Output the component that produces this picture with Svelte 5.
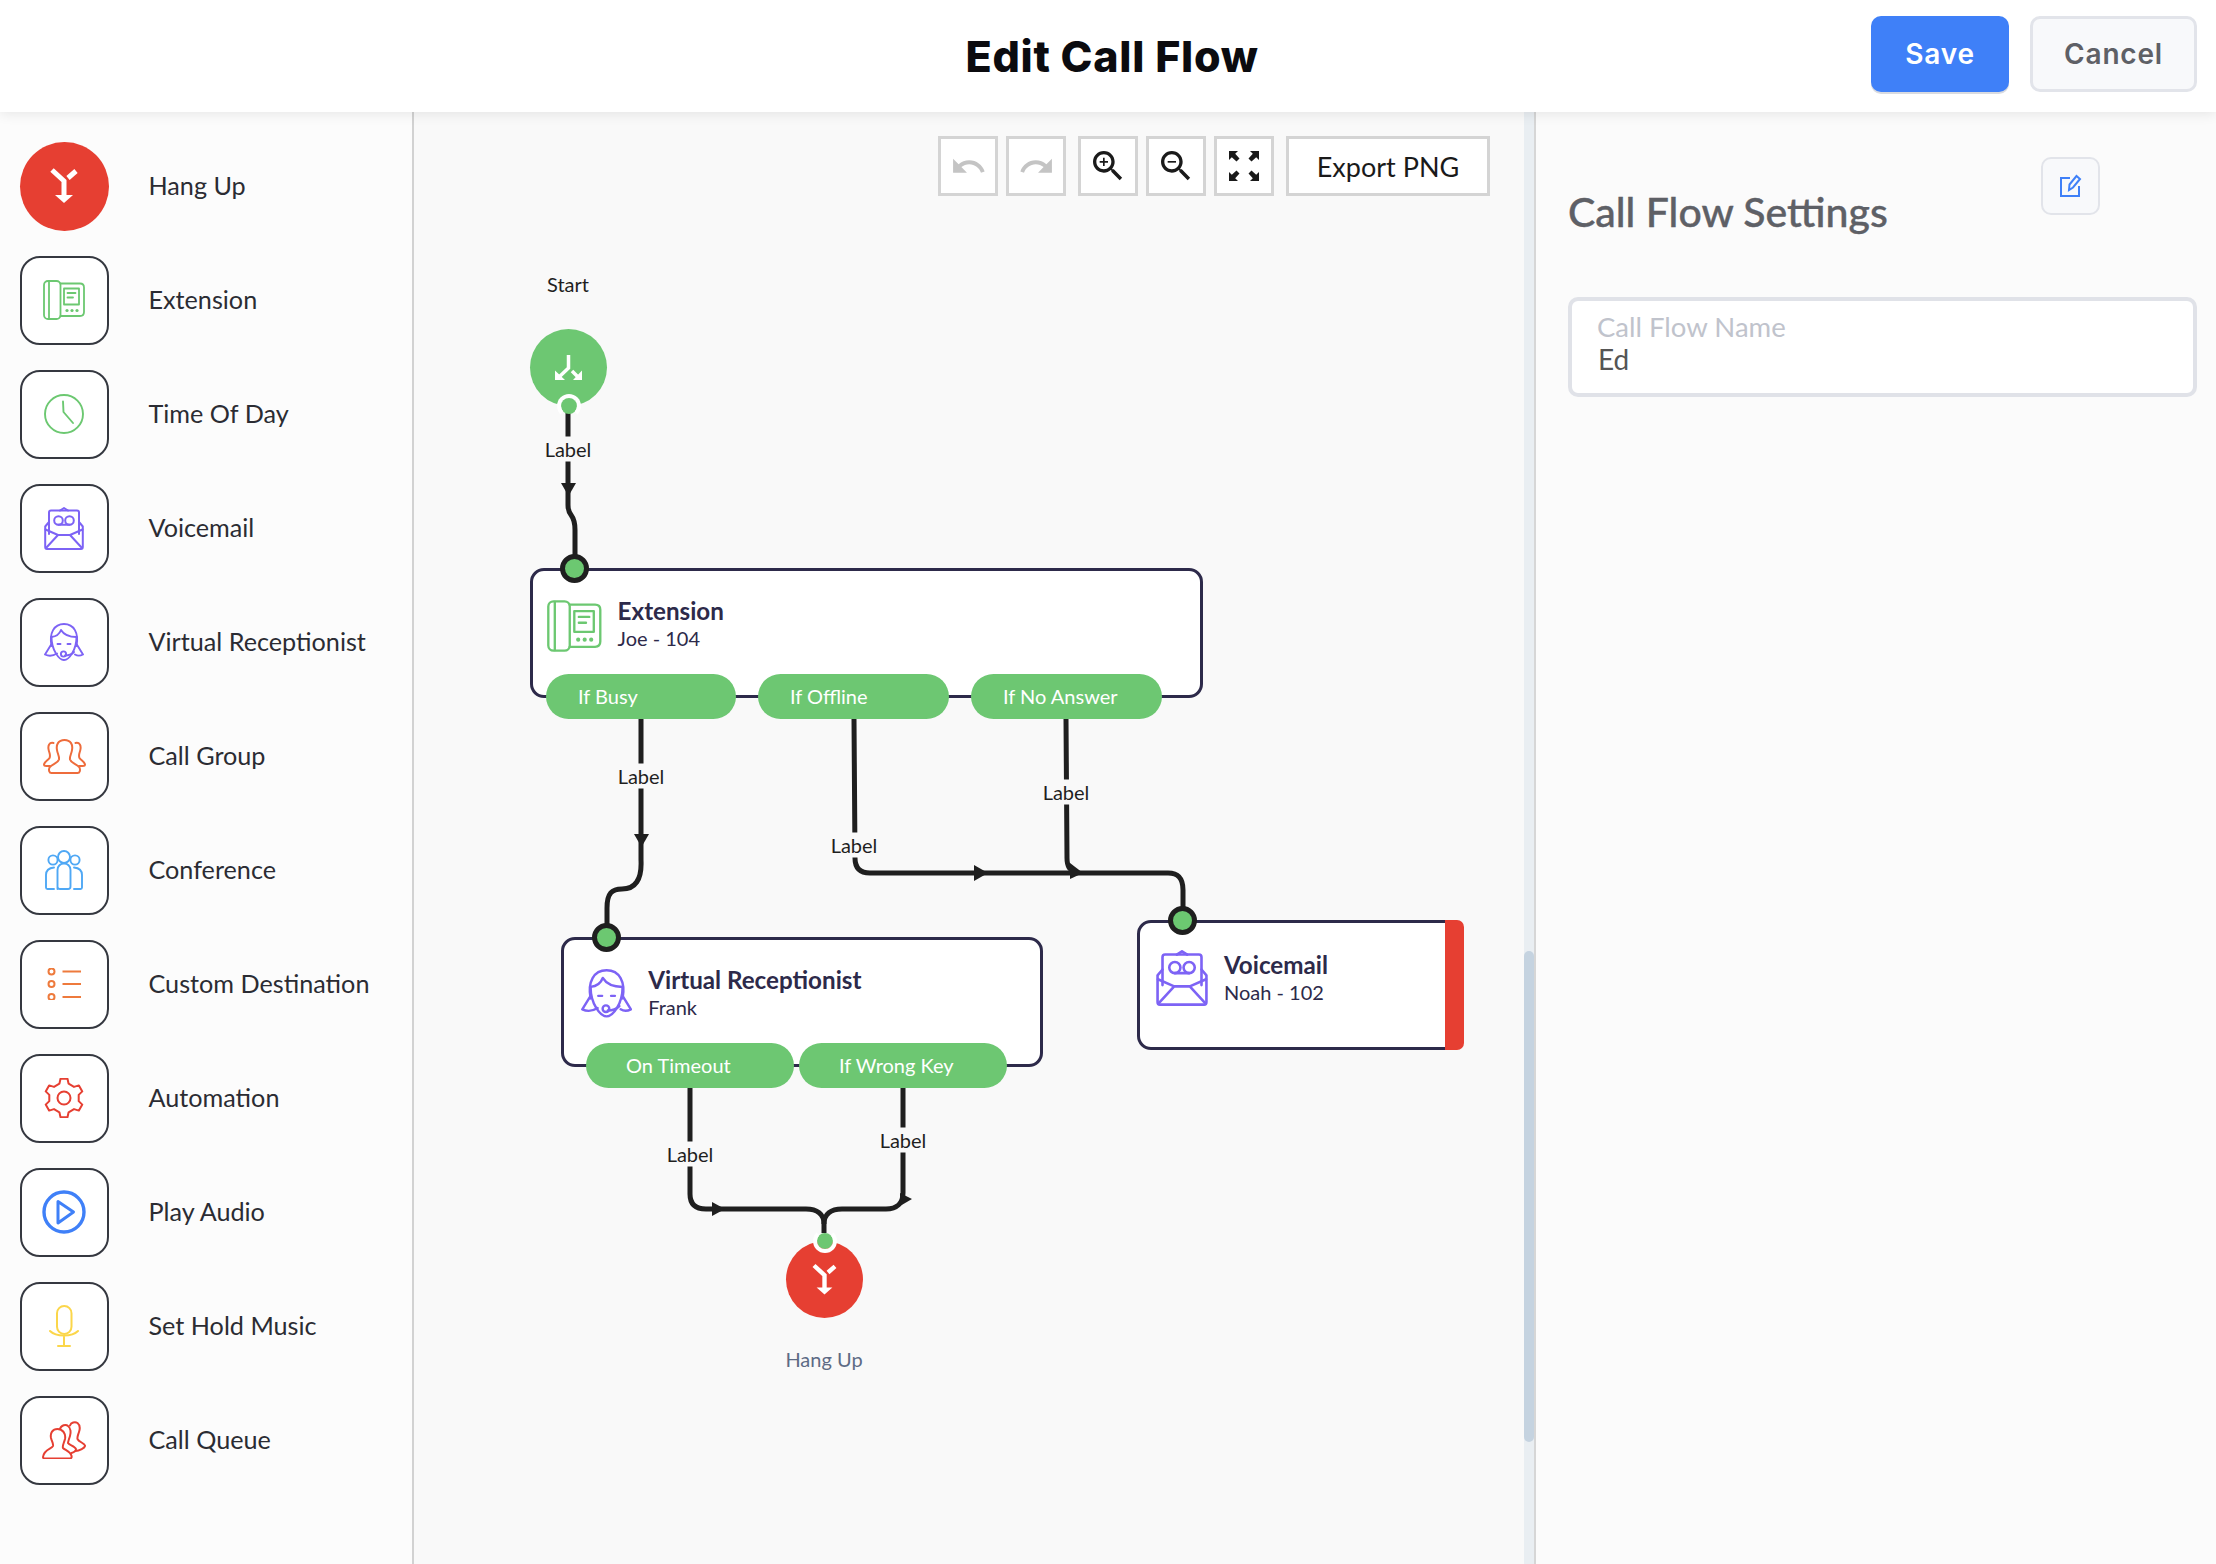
<script>
  const tools = [
    { label: "Hang Up", icon: "hangup", round: true },
    { label: "Extension", icon: "extension" },
    { label: "Time Of Day", icon: "clock" },
    { label: "Voicemail", icon: "voicemail" },
    { label: "Virtual Receptionist", icon: "receptionist" },
    { label: "Call Group", icon: "group" },
    { label: "Conference", icon: "conference" },
    { label: "Custom Destination", icon: "custom" },
    { label: "Automation", icon: "gear" },
    { label: "Play Audio", icon: "play" },
    { label: "Set Hold Music", icon: "mic" },
    { label: "Call Queue", icon: "queue" },
  ];

  const sizes = {
    hangup: [88, 88], extension: [42, 40], clock: [40, 40], voicemail: [40, 43],
    receptionist: [40, 38], group: [43, 35], conference: [38, 40], custom: [34, 32],
    gear: [40, 40], play: [44, 44], mic: [30, 42], queue: [44, 38],
  };

  // canvas starts at 414,112 in page coordinates
  const OX = 414;
  const OY = 112;

  const nodes = [
    {
      title: "Extension", sub: "Joe - 104", icon: "extension", scale: 1.3,
      x: 529.5, y: 568, w: 673, h: 130, port: 45.5, pad: 17.5, bodyTop: 29, textTop: 0,
      pills: [
        { text: "If Busy", x: 16.5, w: 190, pad: 32 },
        { text: "If Offline", x: 228.5, w: 191, pad: 32 },
        { text: "If No Answer", x: 441.5, w: 191, pad: 32 },
      ],
    },
    {
      title: "Virtual Receptionist", sub: "Frank", icon: "receptionist", scale: 1.28,
      x: 561, y: 937, w: 482, h: 130, port: 46, pad: 20, bodyTop: 29, textTop: 0,
      pills: [
        { text: "On Timeout", x: 25, w: 208, pad: 40 },
        { text: "If Wrong Key", x: 238, w: 208, pad: 40 },
      ],
    },
    {
      title: "Voicemail", sub: "Noah - 102", icon: "voicemail", scale: 1.3,
      x: 1137, y: 920, w: 327, h: 130, port: 46, pad: 19, bodyTop: 27, textTop: 4, bar: true, pills: [],
    },
  ];

  const edgeLabels = [
    [568, 449], [641, 776], [854, 845], [1066, 792], [690, 1154], [903, 1140],
  ];

  const edges = [
    "M568 413V505C568 518 575 512 575 530V556",
    "M641 719V860C642 880 635 889 622 889C612 889 607 893 607 908V925",
    "M854 719L855 858C855 868 860 873 870 873H1168C1178 873 1183 878 1183 890V908",
    "M1066 719L1067 858C1067 867 1070 870 1076 873",
    "M690 1087V1194C690 1204 695 1209 706 1209H806C817 1209 824 1214 824 1224V1233",
    "M903 1087V1193C903 1203 897 1209 886 1209H842C831 1209 824 1214 824 1224",
  ];

  const arrows = [
    "561,483 576,483 568.5,496",
    "634,834 649,834 641.5,847",
    "974,865 988,873 974,881",
    "1070,863 1083,873 1070,879",
    "712,1202 725,1209 712,1216",
    "900,1193 912,1199 900,1206",
  ];

  function gearPath(teeth, cx, cy, outer, root) {
    let pts = [];
    const step = (Math.PI * 2) / teeth;
    for (let i = 0; i < teeth; i++) {
      const a = -Math.PI / 2 + i * step;
      const at = (ang, r) => `${(cx + Math.cos(ang) * r).toFixed(1)} ${(cy + Math.sin(ang) * r).toFixed(1)}`;
      pts.push(at(a - step * 0.3, root), at(a - step * 0.17, outer), at(a + step * 0.17, outer), at(a + step * 0.3, root));
    }
    return "M" + pts.join("L") + "Z";
  }
</script>

{#snippet glyph(name, scale)}
  <svg class="glyph" width={sizes[name][0] * scale} height={sizes[name][1] * scale} viewBox="0 0 {sizes[name][0]} {sizes[name][1]}" fill="none" stroke-linecap="round" stroke-linejoin="round">
    {#if name === "hangup"}
      <g stroke="#fff" stroke-width="5" stroke-linecap="butt" stroke-linejoin="miter">
        <path d="M32 28L44 39V54M56 29L48 36" />
      </g>
      <path d="M35 53H53L44 61Z" fill="#fff" />
    {:else if name === "extension"}
      <g stroke="#6cc871" stroke-width="1.8">
        <rect x="1" y="1" width="16.5" height="38" rx="4" />
        <path d="M6 1.5V38.5" />
        <path d="M17.5 3.5H37C39.5 3.5 41 5 41 7.5V32C41 34.5 39.5 36 37 36H17.5" />
        <rect x="21" y="8.5" width="15" height="16" />
        <path d="M24.5 13H32.5M24.5 17.5H30" />
      </g>
      <g fill="#6cc871">
        <circle cx="24" cy="30.5" r="1.6" /><circle cx="29" cy="30.5" r="1.6" /><circle cx="34" cy="30.5" r="1.6" />
      </g>
    {:else if name === "clock"}
      <g stroke="#6cc871" stroke-width="1.9">
        <circle cx="20" cy="20" r="19" />
        <path d="M19 7.5L19.5 18L29 29" />
      </g>
    {:else if name === "voicemail"}
      <g stroke="#7d63f5" stroke-width="2">
        <path d="M5 27V5.5C5 4 6 3.5 7 3.5H33C34 3.5 35 4 35 5.5V27" />
        <path d="M16 3.5L20 1L24 3.5" />
        <circle cx="14.5" cy="13.5" r="4.3" /><circle cx="25.5" cy="13.5" r="4.3" />
        <path d="M14.5 17.8H25.5" />
        <path d="M5 15L1.2 19.5V40C1.2 41.2 2 42 3 42H37C38 42 38.8 41.2 38.8 40V19.5L35 15" />
        <path d="M2 41L14 28H26L38 41M1.5 22.5L14 28M38.5 22.5L26 28" />
      </g>
    {:else if name === "receptionist"}
      <g stroke="#7d63f5" stroke-width="1.9">
        <path d="M7.5 23C5 10 10 1 20 1C30 1 35 10 32.5 23" />
        <path d="M7.5 14C12 13.5 15.5 11 17 7C20 12 26 14 32.5 14" />
        <path d="M7.5 14C7.5 27 15 37 20 37C25 37 32.5 27 32.5 14" />
        <path d="M7.5 21L1 31.5C5 33.5 9 33 13 30.5M32.5 21L39 31.5C36 33 33.5 33 31 31.5" />
        <path d="M13.5 21H16.5M23.5 21H26.5" />
        <path d="M21 32.5C25 32.5 28 31 30 29" />
      </g>
      <circle cx="19.5" cy="31" r="2.6" stroke="#7d63f5" stroke-width="1.9" />
    {:else if name === "group"}
      <g stroke="#ee6c3c" stroke-width="2">
        <path d="M21.5 1C15 1 13 6 14 11C14.5 15 16.5 17 16 20.5C15 24 9 25 6.5 28.5C5.5 31 6 34 8.5 34H34.5C37 34 37.5 31 36.5 28.5C34 25 28 24 27 20.5C26.5 17 28.5 15 29 11C30 6 28 1 21.5 1Z" />
        <path d="M10.5 4C6 3 5 7 5.5 10C6 14 8 15.5 6.5 19C5 21.5 1.5 22.5 1 25.5C1 26.5 2 27 3.5 27H7" />
        <path d="M32.5 4C37 3 38 7 37.5 10C37 14 35 15.5 36.5 19C38 21.5 41.5 22.5 42 25.5C42 26.5 41 27 39.5 27H36" />
      </g>
    {:else if name === "conference"}
      <g stroke="#4fa8f5" stroke-width="1.9">
        <circle cx="19" cy="7" r="6" /><circle cx="8" cy="10" r="4.6" /><circle cx="30" cy="10" r="4.6" />
        <path d="M12.5 39V20C12.5 16 15.5 13.5 19 13.5C22.5 13.5 25.5 16 25.5 20V36.5C25.5 38 24.5 39 23 39H15C13.5 39 12.5 38 12.5 36.5" />
        <path d="M9 17.5C4 18 1 20.5 1 25V37.5C1 38.5 1.5 39 2.5 39H9" />
        <path d="M29 17.5C34 18 37 20.5 37 25V37.5C37 38.5 36.5 39 35.5 39H29" />
      </g>
    {:else if name === "custom"}
      <g stroke="#ee7a3c" stroke-width="2">
        <circle cx="4.5" cy="3.5" r="3" /><circle cx="4.5" cy="16" r="3" /><circle cx="4.5" cy="29" r="3" />
        <path d="M15.5 3.5H36M15.5 16H36M15.5 29H36" stroke-linecap="butt" />
      </g>
    {:else if name === "gear"}
      <g stroke="#e63f32" stroke-width="2">
        <path d={gearPath(6, 20, 20, 19.5, 15)} />
        <circle cx="20" cy="20" r="6.5" />
      </g>
    {:else if name === "play"}
      <g stroke="#3f80f8" stroke-width="3.4">
        <circle cx="22" cy="22" r="20" />
        <path d="M16 11.5L31.5 22L16 33Z" stroke-width="3" />
      </g>
    {:else if name === "mic"}
      <g stroke="#fbd64a" stroke-width="2">
        <rect x="8" y="1" width="14.5" height="28" rx="7.2" />
        <path d="M1 26C7 32 23 32 29 26M15 32V41M9 41H21" />
      </g>
    {:else if name === "queue"}
      <g stroke="#e63f32" stroke-width="2">
        <path d="M15.5 8C10.5 8 8 12 9 17C10 21 11.5 22.5 11 25C10 28 2 28 1 36C1 37 2 37.5 3 37.5H27C29 37.5 30 37 29.5 35C29 31 23 29 21 27C20 25 22 22 23 18C24 13 21 8 15.5 8Z" />
        <path d="M18 8C19 4 24 3 26 5C29 7 29 12 28 15C27 18 26 21 26 22C27 24 33 25 34 28C34 29 33 31 29.5 32" />
        <path d="M28 4.5C29 1.5 33 0.5 35.5 2C38 4 38 8 37 11C36 14 35 16 35.5 18C37 21 42 22 43 24.5C43.5 27 37 30 33.5 30" />
      </g>
    {/if}
  </svg>
{/snippet}

<div class="page">
  <header class="appbar">
    <div></div>
    <h1>Edit Call Flow</h1>
    <div class="actions">
      <button class="save">Save</button>
      <button class="cancel">Cancel</button>
    </div>
  </header>

  <div class="main">
    <aside class="tools">
      {#each tools as tool}
        <div class="tool">
          <div class="tile" class:round={tool.round}>
            {@render glyph(tool.icon, 1)}
          </div>
          <span>{tool.label}</span>
        </div>
      {/each}
    </aside>

    <section class="canvas">
      <div class="toolbar">
        <div class="tb-group">
          <button class="tb" aria-label="Undo">
            <svg width="37" height="37" viewBox="0 0 24 24" fill="#c4c4c4"><path d="M12.5 8c-2.65 0-5.05.99-6.9 2.6L2 7v9h9l-3.62-3.62c1.39-1.16 3.16-1.88 5.12-1.88 3.54 0 6.55 2.31 7.6 5.5l2.37-.78C21.08 11.03 17.15 8 12.5 8z" /></svg>
          </button>
          <button class="tb" aria-label="Redo">
            <svg width="37" height="37" viewBox="0 0 24 24" fill="#c4c4c4"><path d="M18.4 10.6C16.55 8.99 14.15 8 11.5 8c-4.65 0-8.58 3.03-9.96 7.22L3.9 16c1.05-3.19 4.05-5.5 7.6-5.5 1.95 0 3.73.72 5.12 1.88L13 16h9V7l-3.6 3.6z" /></svg>
          </button>
        </div>
        <div class="tb-group">
          <button class="tb" aria-label="Zoom in">
            <svg width="40" height="40" viewBox="0 0 24 24" fill="#1a1a1a"><path d="M15.5 14h-.79l-.28-.27C15.41 12.59 16 11.11 16 9.5 16 5.91 13.09 3 9.5 3S3 5.91 3 9.5 5.91 16 9.5 16c1.61 0 3.09-.59 4.23-1.57l.27.28v.79l5 4.99L20.49 19l-4.99-5zm-6 0C7.01 14 5 11.99 5 9.5S7.01 5 9.5 5 14 7.01 14 9.5 11.99 14 9.5 14z" /><path d="M12 10h-2v2H9v-2H7V9h2V7h1v2h2v1z" /></svg>
          </button>
          <button class="tb" aria-label="Zoom out">
            <svg width="40" height="40" viewBox="0 0 24 24" fill="#1a1a1a"><path d="M15.5 14h-.79l-.28-.27C15.41 12.59 16 11.11 16 9.5 16 5.91 13.09 3 9.5 3S3 5.91 3 9.5 5.91 16 9.5 16c1.61 0 3.09-.59 4.23-1.57l.27.28v.79l5 4.99L20.49 19l-4.99-5zm-6 0C7.01 14 5 11.99 5 9.5S7.01 5 9.5 5 14 7.01 14 9.5 11.99 14 9.5 14z" /><path d="M7 9h5v1H7z" /></svg>
          </button>
          <button class="tb" aria-label="Fit">
            <svg width="30" height="30" viewBox="0 0 30 30" fill="#1a1a1a">
              <path d="M0 0H9L6.2 2.8L10.5 7.5L7.5 10.5L2.8 6.2L0 9Z" />
              <path d="M30 0H21L23.8 2.8L19.5 7.5L22.5 10.5L27.2 6.2L30 9Z" />
              <path d="M0 30H9L6.2 27.2L10.5 22.5L7.5 19.5L2.8 23.8L0 21Z" />
              <path d="M30 30H21L23.8 27.2L19.5 22.5L22.5 19.5L27.2 23.8L30 21Z" />
            </svg>
          </button>
        </div>
        <button class="tb export">Export PNG</button>
      </div>

      <svg class="edges" width="1120" height="1452" viewBox="{OX} {OY} 1120 1452" fill="none">
        {#each edges as d}
          <path {d} stroke="#1f1f1f" stroke-width="5" />
        {/each}
        {#each arrows as points}
          <polygon {points} fill="#1f1f1f" />
        {/each}
      </svg>

      {#each edgeLabels as [x, y]}
        <div class="edge-label" style="left: {x - OX}px; top: {y - OY}px">Label</div>
      {/each}

      <div class="terminal-caption" style="left: {568 - OX}px; top: {284 - OY}px">Start</div>
      <div class="terminal start" style="left: {530 - OX}px; top: {329 - OY}px">
        <svg width="77" height="77" viewBox="0 0 77 77" fill="none" stroke="#fff" stroke-width="3.5">
          <path d="M38.5 26V39L28 49M42 42L49 49" />
          <path d="M25 41.5V51H35Z" fill="#fff" stroke="none" />
          <path d="M52 41.5V51H43Z" fill="#fff" stroke="none" />
        </svg>
        <i class="term-port below"></i>
      </div>

      {#each nodes as n}
        <div class="node" style="left: {n.x - OX}px; top: {n.y - OY}px; width: {n.w}px; height: {n.h}px; padding: {n.bodyTop}px 0 0 {n.pad - 3}px">
          <i class="node-port" style="left: {n.port - 18}px"></i>
          {@render glyph(n.icon, n.scale)}
          <div class="node-text" style="margin-top: {n.textTop}px">
            <strong>{n.title}</strong>
            <span>{n.sub}</span>
          </div>
          {#if n.bar}<b class="bar"></b>{/if}
          {#each n.pills as p}
            <div class="pill" style="left: {p.x - 3}px; width: {p.w}px; padding-left: {p.pad}px">{p.text}</div>
          {/each}
        </div>
      {/each}

      <div class="terminal hang" style="left: {786 - OX}px; top: {1241 - OY}px">
        <svg width="77" height="77" viewBox="0 0 88 88">
          <path d="M32 28L44 39V54M56 29L48 36" stroke="#fff" stroke-width="5" fill="none" />
          <path d="M35 53H53L44 61Z" fill="#fff" />
        </svg>
        <i class="term-port above"></i>
      </div>
      <div class="terminal-caption muted" style="left: {824 - OX}px; top: {1359 - OY}px">Hang Up</div>

      <div class="scrollbar"><div class="thumb"></div></div>
    </section>

    <aside class="settings">
      <div class="settings-head">
        <h2>Call Flow Settings</h2>
        <button class="edit" aria-label="Edit">
          <svg width="26" height="26" viewBox="0 0 26 26" fill="none" stroke="#3f80f8" stroke-width="2">
            <path d="M12 5H3V23H21V13" />
            <path d="M11 17L11.5 11.5L18.5 3L22 6L15 14.5Z" />
          </svg>
        </button>
      </div>
      <div class="field">
        <label for="flow-name">Call Flow Name</label>
        <input id="flow-name" value="Ed" />
      </div>
    </aside>
  </div>
</div>

<style>
  :global(body) {
    margin: 0;
    background: #fbfbfb;
    font-family: Lato, "Open Sans", sans-serif;
  }
  .page {
    width: 2216px;
    height: 1564px;
    display: flex;
    flex-direction: column;
    overflow: hidden;
  }
  .appbar {
    height: 112px;
    flex: none;
    box-sizing: border-box;
    background: #fff;
    box-shadow: 0 2px 12px rgba(0, 0, 0, 0.09);
    display: grid;
    grid-template-columns: 1fr auto 1fr;
    align-items: center;
    padding: 0 19px 0 27px;
    position: relative;
    z-index: 2;
  }
  h1 {
    margin: 0;
    font-family: Inter, sans-serif;
    font-weight: 800;
    font-size: 43px;
    letter-spacing: 0.7px;
    color: #0b0b0f;
  }
  .actions {
    display: flex;
    justify-content: flex-end;
    gap: 21px;
    margin-top: -4px;
  }
  .actions button {
    height: 76px;
    border-radius: 10px;
    font-family: Inter, sans-serif;
    font-size: 28px;
    font-weight: 600;
    letter-spacing: 0.8px;
  }
  .save {
    width: 138px;
    background: #3f80f8;
    color: #fff;
    border: none;
    box-shadow: 0 2px 0 #d9dbe0;
  }
  .cancel {
    width: 167px;
    background: #f8f9fb;
    color: #5e6066;
    border: 3px solid #e2e4ea;
  }
  .main {
    flex: 1;
    display: flex;
    min-height: 0;
  }
  .tools {
    width: 414px;
    box-sizing: border-box;
    flex: none;
    background: #fcfcfc;
    border-right: 2px solid #d2d2d2;
    padding: 29.5px 0 0 20px;
    display: flex;
    flex-direction: column;
    gap: 25px;
  }
  .tool {
    display: flex;
    align-items: center;
    gap: 40px;
    height: 89px;
    font-size: 25.2px;
    color: #2b2c33;
  }
  .tool span {
    margin-top: -2px;
  }
  .tile {
    width: 88.5px;
    height: 89px;
    box-sizing: border-box;
    flex: none;
    background: #fff;
    border: 2.5px solid #353840;
    border-radius: 20px;
    display: flex;
    align-items: center;
    justify-content: center;
  }
  .tile.round {
    background: #e63f32;
    border: none;
    border-radius: 50%;
  }
  .glyph {
    flex: none;
  }
  .canvas {
    width: 1120px;
    flex: none;
    position: relative;
    background: #f9f9f9;
  }
  .toolbar {
    display: flex;
    justify-content: flex-end;
    gap: 12px;
    padding: 24px 44px 0 0;
    position: relative;
    z-index: 1;
  }
  .tb-group {
    display: flex;
    gap: 8px;
  }
  .tb {
    width: 60px;
    height: 60px;
    padding: 0;
    box-sizing: border-box;
    background: #fff;
    border: 3px solid #d4d4d4;
    display: flex;
    align-items: center;
    justify-content: center;
  }
  .export {
    width: 204px;
    font-family: Lato, sans-serif;
    font-size: 27px;
    color: #1a1a1a;
  }
  .edges {
    position: absolute;
    left: 0;
    top: 0;
  }
  .edge-label {
    position: absolute;
    transform: translate(-50%, -50%);
    background: #f9f9f9;
    font-size: 20px;
    line-height: 25px;
    color: #1f1f1f;
  }
  .terminal-caption {
    position: absolute;
    transform: translate(-50%, -50%);
    font-size: 20px;
    color: #1f1f1f;
    white-space: nowrap;
  }
  .terminal-caption.muted {
    color: #5d6b85;
  }
  .terminal {
    position: absolute;
    width: 77px;
    height: 77px;
    border-radius: 50%;
  }
  .terminal svg {
    display: block;
  }
  .terminal.start {
    background: #6dc772;
  }
  .terminal.hang {
    background: #e63f32;
  }
  .term-port {
    position: absolute;
    left: 26.5px;
    width: 16px;
    height: 16px;
    border: 4px solid #fff;
    border-radius: 50%;
    background: #6dc772;
    background-clip: padding-box;
    box-sizing: content-box;
  }
  .term-port.below {
    bottom: -12px;
    border-bottom-color: transparent;
  }
  .term-port.above {
    top: -12px;
    border-top-color: transparent;
  }
  .node {
    position: absolute;
    box-sizing: border-box;
    background: #fff;
    border: 3px solid #2d2a4a;
    border-radius: 14px;
    display: flex;
    align-items: flex-start;
    gap: 16px;
    color: #2d2a4a;
  }
  .node-port {
    position: absolute;
    top: -17px;
    width: 29px;
    height: 29px;
    box-sizing: border-box;
    background: #6cc871;
    border: 5px solid #1f1f1f;
    border-radius: 50%;
  }
  .node-text {
    display: flex;
    flex-direction: column;
  }
  .node-text strong {
    font-size: 24.2px;
    font-weight: 700;
    line-height: 30px;
    margin-top: -4px;
  }
  .node-text span {
    font-size: 20px;
    line-height: 25px;
  }
  .bar {
    position: absolute;
    right: -3px;
    top: -3px;
    bottom: -3px;
    width: 19px;
    background: #e63f32;
    border-radius: 0 7px 7px 0;
  }
  .pill {
    position: absolute;
    top: 103px;
    height: 45px;
    box-sizing: border-box;
    background: #6dc772;
    border-radius: 23px;
    color: #fff;
    font-size: 20px;
    line-height: 45px;
  }
  .scrollbar {
    position: absolute;
    right: 0;
    top: 0;
    bottom: 0;
    width: 10px;
    background: #e9eef2;
  }
  .thumb {
    position: absolute;
    top: 839px;
    height: 491px;
    width: 100%;
    background: #c5d3e0;
    border-radius: 5px;
  }
  .settings {
    flex: 1;
    box-sizing: border-box;
    background: #fbfbfb;
    border-left: 2px solid #d6d6d6;
    padding: 45px 19px 0 32px;
  }
  .settings-head {
    display: flex;
    justify-content: space-between;
    height: 140px;
  }
  h2 {
    margin: 30px 0 0;
    font-family: Lato, sans-serif;
    font-weight: 500;
    font-size: 41px;
    line-height: 50px;
    color: #5e6066;
    -webkit-text-stroke: 0.4px #5e6066;
  }
  .edit {
    width: 59px;
    height: 58px;
    margin-right: 97px;
    padding: 0;
    background: #f8f9fb;
    border: 2px solid #e2e4ea;
    border-radius: 10px;
    display: flex;
    align-items: center;
    justify-content: center;
  }
  .field {
    height: 100px;
    box-sizing: border-box;
    background: #fff;
    border: 4px solid #e0e2e8;
    border-radius: 10px;
    padding: 10px 0 0 25px;
    display: flex;
    flex-direction: column;
  }
  .field label {
    font-size: 27.5px;
    line-height: 31px;
    color: #c0c3cc;
  }
  .field input {
    border: none;
    outline: none;
    padding: 0 0 0 1px;
    background: transparent;
    font-family: Lato, sans-serif;
    font-size: 28px;
    line-height: 34px;
    color: #555;
  }
</style>
